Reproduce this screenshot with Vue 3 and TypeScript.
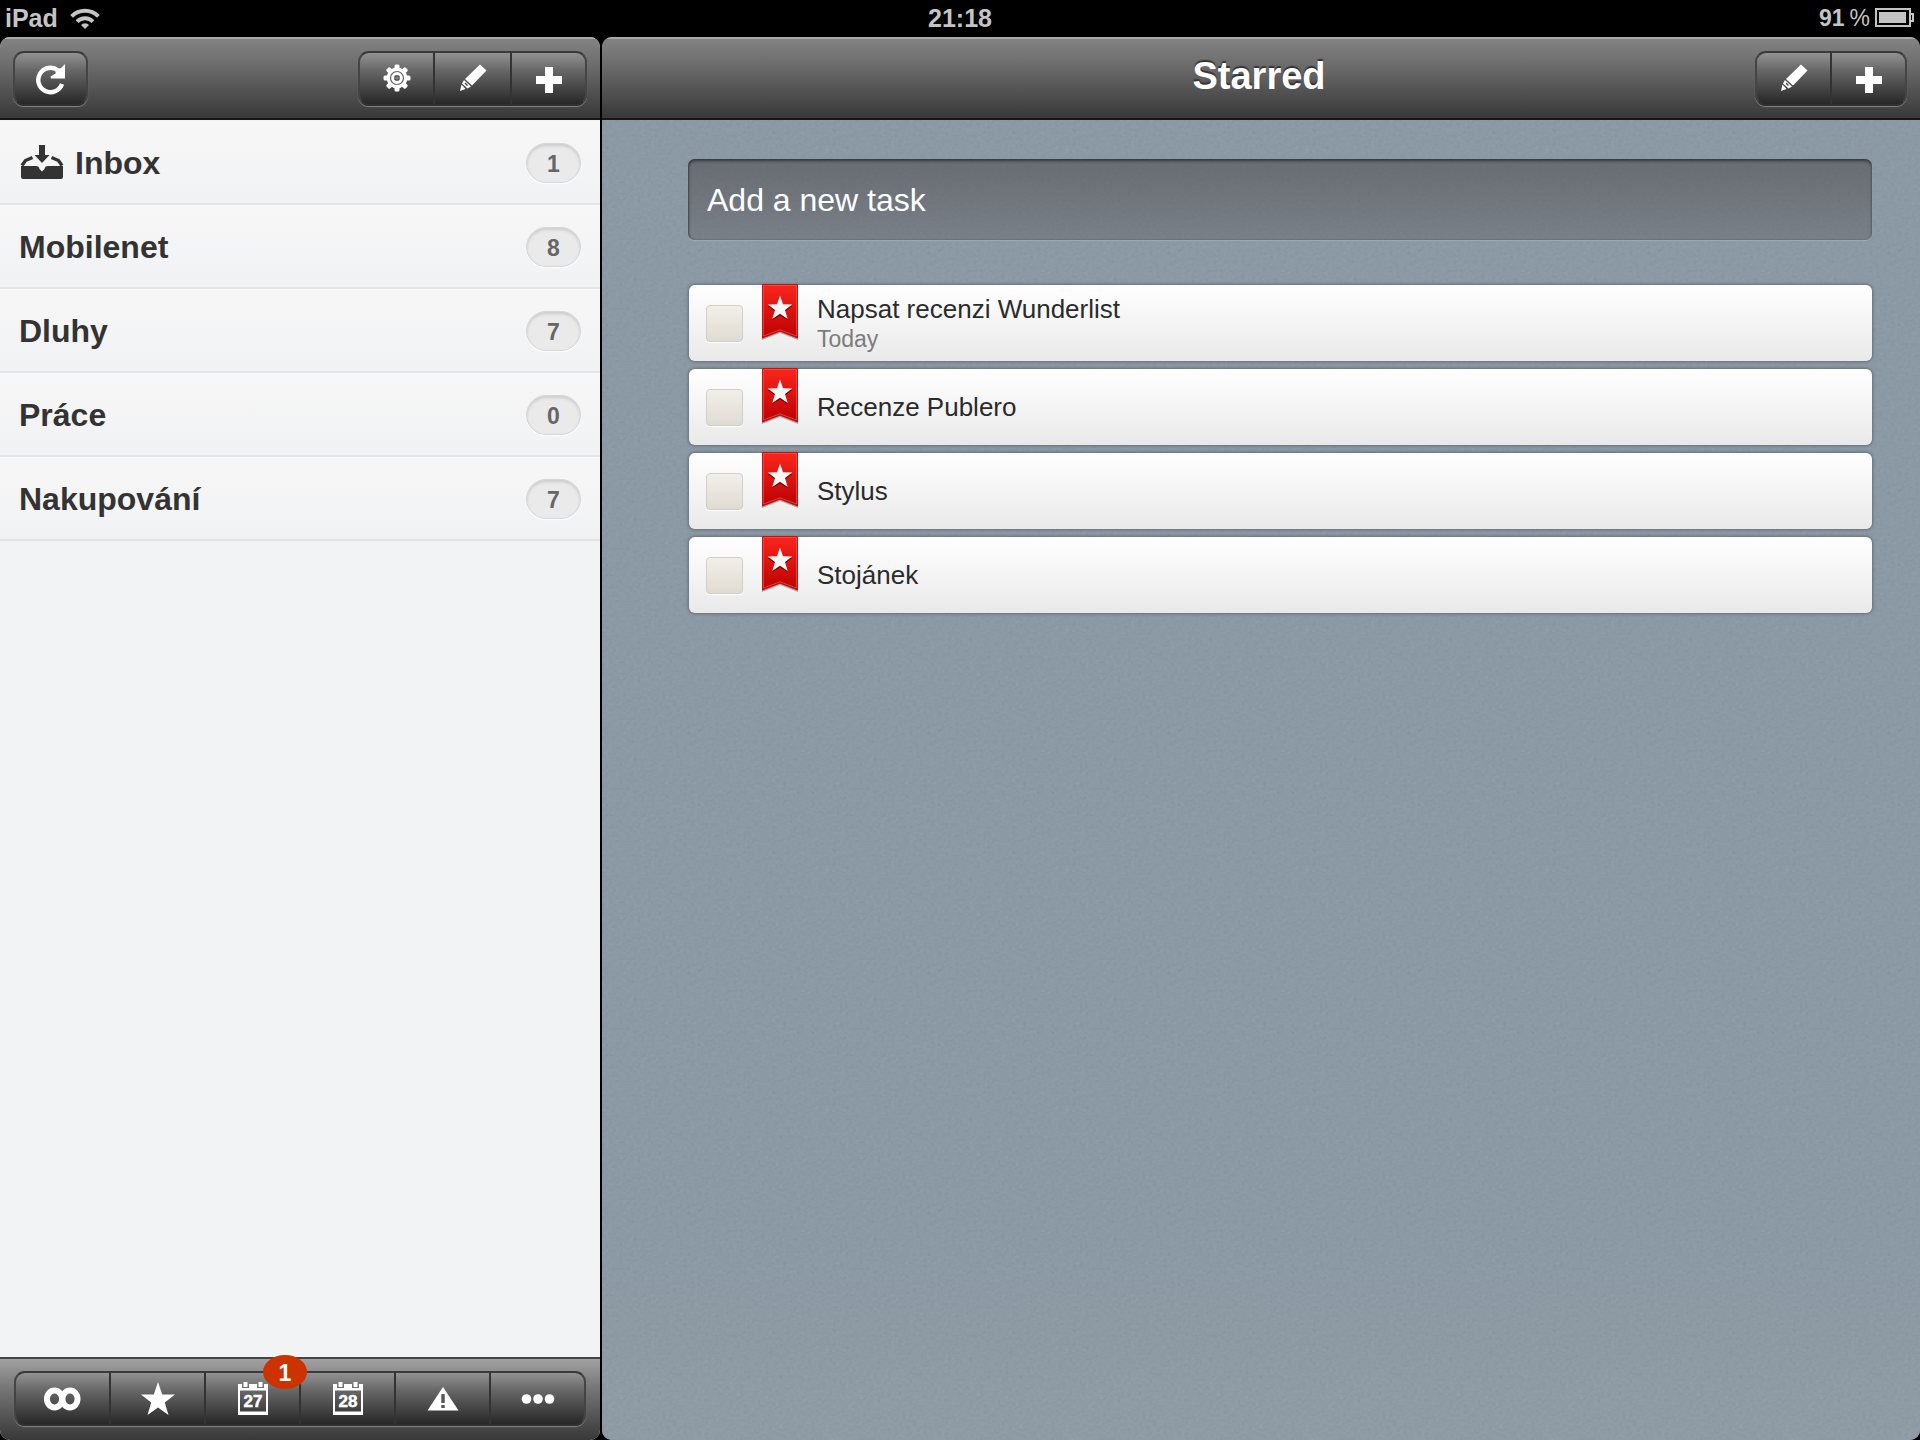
<script setup lang="ts">
import { ref } from 'vue'

interface TaskList {
  name: string
  count: number
  inbox?: boolean
}

interface Task {
  id: string
  title: string
  due?: string
  done: boolean
}

const lists: TaskList[] = [
  { name: 'Inbox', count: 1, inbox: true },
  { name: 'Mobilenet', count: 8 },
  { name: 'Dluhy', count: 7 },
  { name: 'Práce', count: 0 },
  { name: 'Nakupování', count: 7 },
]

const tasks = ref<Task[]>([
  { id: 'task-1', title: 'Napsat recenzi Wunderlist', due: 'Today', done: false },
  { id: 'task-2', title: 'Recenze Publero', done: false },
  { id: 'task-3', title: 'Stylus', done: false },
  { id: 'task-4', title: 'Stojánek', done: false },
])

const draft = ref('')

const gearTeeth = [0, 45, 90, 135, 180, 225, 270, 315]
</script>

<template>
  <div class="screen">
    <header class="status">
      <div class="status-left">
        <span>iPad</span>
        <svg width="30" height="21" viewBox="0 0 30 21" aria-hidden="true">
          <g fill="none" stroke="#c4c4c4" stroke-width="4">
            <path d="M1.6 8.4 A19 19 0 0 1 28.4 8.4" />
            <path d="M7 13.6 A11.5 11.5 0 0 1 23 13.6" />
          </g>
          <path d="M15 21 L11 17 A5.6 5.6 0 0 1 19 17 Z" fill="#c4c4c4" />
        </svg>
      </div>
      <span class="clock">21:18</span>
      <div class="status-right">
        <span>91</span><span class="percent">%</span>
        <svg width="40" height="20" viewBox="0 0 40 20" aria-hidden="true">
          <rect x="1" y="1" width="34" height="17" fill="none" stroke="#c4c4c4" stroke-width="2" />
          <rect x="4" y="4" width="27" height="11" fill="#c4c4c4" />
          <path d="M36 6 H38 V13 H36" fill="none" stroke="#c4c4c4" stroke-width="2" />
        </svg>
      </div>
    </header>

    <div class="panes">
      <aside class="sidebar">
        <div class="bar">
          <div class="group">
            <button class="key" type="button" aria-label="Refresh">
              <svg width="32" height="34" viewBox="1 -1 32 34" aria-hidden="true">
                <path d="M28 22 A12.200 12.200 0 1 1 24 8.400" fill="none" stroke="#fff" stroke-width="4.400" />
                <path d="M31 2 V16.500 H17 L16.500 14.500 L21.500 11.500 L22 7.500 L27 6 Z" fill="#fff" />
              </svg>
            </button>
          </div>
          <div class="group">
            <button class="key" type="button" aria-label="Settings">
              <svg width="28" height="28" viewBox="-14 -14 28 28" aria-hidden="true">
                <g fill="#fff">
                  <rect v-for="a in gearTeeth" :key="a" x="-2.500" y="-13.500" width="5" height="6" rx="1.500" :transform="`rotate(${a})`" />
                  <circle r="10.400" />
                </g>
                <circle r="6.500" fill="none" stroke="#666" stroke-width="1.200" />
                <circle r="2.900" fill="#444" />
                <path d="M-3 0 H3 M0 -3 V3" stroke="#999" stroke-width="1" />
              </svg>
            </button>
            <button class="key" type="button" aria-label="Edit lists">
              <svg width="28" height="28" viewBox="0 0 28 28" aria-hidden="true">
                <path d="M21 0.500 L27.500 6.500 L13 21.500 L6 15 Z" fill="#fff" />
                <path d="M5 16 L12 22.500 L8.500 24.500 L3 19.500 Z" fill="#fff" />
                <path d="M2.500 20.500 L6.500 25 L1 27 Z" fill="#fff" />
                <path d="M6 19 L8.500 21.500" stroke="#555" stroke-width="1.500" />
              </svg>
            </button>
            <button class="key" type="button" aria-label="Add list">
              <svg class="plus" width="28" height="28" viewBox="0 0 28 28" aria-hidden="true">
                <path d="M10 1 H18 V10 H27 V18 H18 V27 H10 V18 H1 V10 H10 Z" fill="#fff" />
              </svg>
            </button>
          </div>
        </div>

        <nav class="lists" aria-label="Lists">
          <a v-for="list in lists" :key="list.name" class="list" href="#">
            <svg v-if="list.inbox" class="tray" width="46" height="36" viewBox="1 1 46 36" aria-hidden="true">
              <g fill="#333">
                <path d="M21 1 H27 V11 H31.500 L24 19 L16.500 11 H21 Z" />
                <path d="M3 22 H18 Q21 22 21.500 25 L24 27.500 L26.500 25 Q27 22 30 22 H45 V33 Q45 35 43 35 H5 Q3 35 3 33 Z" />
              </g>
              <g fill="none" stroke="#333" stroke-width="3.400">
                <path d="M4 21.500 L7.500 16.500 L14.500 13.500" />
                <path d="M44 21.500 L40.500 16.500 L33.500 13.500" />
              </g>
            </svg>
            <span class="name">{{ list.name }}</span>
            <span class="count">{{ list.count }}</span>
          </a>
        </nav>

        <footer class="bar filters">
          <div class="group wide">
            <button class="key" type="button" aria-label="All">
              <svg width="38" height="24" viewBox="0 0 38 24" aria-hidden="true">
                <g fill="none" stroke="#fff" stroke-width="6">
                  <ellipse cx="10.500" cy="12" rx="7.600" ry="8.400" />
                  <ellipse cx="26" cy="12" rx="7.600" ry="8.400" />
                </g>
              </svg>
            </button>
            <button class="key" type="button" aria-label="Starred">
              <svg width="36" height="34" viewBox="0 0 36 34" aria-hidden="true">
                <path d="M18 0 L22.200 12.500 L35 12.600 L24.800 20.500 L28.500 33 L18 25.600 L7.500 33 L11.200 20.500 L1 12.600 L13.800 12.500 Z" fill="#fff" />
              </svg>
            </button>
            <button class="key" type="button" aria-label="Today">
              <svg width="32" height="34" viewBox="0 0 32 34" aria-hidden="true">
                <path d="M1 2 H5 V6 H12 V2 H20 V6 H27 V2 H31 V33 H1 Z M3 8.500 V29.500 H29 V8.500 Z" fill="#fff" fill-rule="evenodd" />
                <path d="M6.500 0 H10.500 V5 H6.500 Z M21.500 0 H25.500 V5 H21.500 Z" fill="#fff" />
                <text class="day" x="16" y="25" text-anchor="middle">27</text>
              </svg>
              <span class="alert">1</span>
            </button>
            <button class="key" type="button" aria-label="Tomorrow">
              <svg width="32" height="34" viewBox="0 0 32 34" aria-hidden="true">
                <path d="M1 2 H5 V6 H12 V2 H20 V6 H27 V2 H31 V33 H1 Z M3 8.500 V29.500 H29 V8.500 Z" fill="#fff" fill-rule="evenodd" />
                <path d="M6.500 0 H10.500 V5 H6.500 Z M21.500 0 H25.500 V5 H21.500 Z" fill="#fff" />
                <text class="day" x="16" y="25" text-anchor="middle">28</text>
              </svg>
            </button>
            <button class="key" type="button" aria-label="Overdue">
              <svg width="32" height="24" viewBox="0 0 32 24" aria-hidden="true">
                <path d="M16 0 L31.500 23.500 H0.500 Z" fill="#fff" />
                <path d="M14.300 7 H17.700 V16 H14.300 Z M14.300 18 H17.700 V21 H14.300 Z" fill="#555" />
              </svg>
            </button>
            <button class="key" type="button" aria-label="More">
              <svg width="34" height="12" viewBox="0 0 34 12" aria-hidden="true">
                <g fill="#fff">
                  <circle cx="5.500" cy="6" r="4.800" />
                  <circle cx="17" cy="6" r="4.800" />
                  <circle cx="28.500" cy="6" r="4.800" />
                </g>
              </svg>
            </button>
          </div>
        </footer>
      </aside>

      <main class="content">
        <div class="bar centered">
          <h1 class="title">Starred</h1>
          <div class="group">
            <button class="key" type="button" aria-label="Edit tasks">
              <svg width="28" height="28" viewBox="0 0 28 28" aria-hidden="true">
                <path d="M21 0.500 L27.500 6.500 L13 21.500 L6 15 Z" fill="#fff" />
                <path d="M5 16 L12 22.500 L8.500 24.500 L3 19.500 Z" fill="#fff" />
                <path d="M2.500 20.500 L6.500 25 L1 27 Z" fill="#fff" />
                <path d="M6 19 L8.500 21.500" stroke="#555" stroke-width="1.500" />
              </svg>
            </button>
            <button class="key" type="button" aria-label="Add task">
              <svg class="plus" width="28" height="28" viewBox="0 0 28 28" aria-hidden="true">
                <path d="M10 1 H18 V10 H27 V18 H18 V27 H10 V18 H1 V10 H10 Z" fill="#fff" />
              </svg>
            </button>
          </div>
        </div>

        <section class="board">
          <input v-model="draft" class="new-task" type="text" placeholder="Add a new task" aria-label="Add a new task" />
          <ul class="tasks">
            <li v-for="task in tasks" :key="task.id" class="task">
              <input :id="task.id" v-model="task.done" class="check" type="checkbox" />
              <svg class="ribbon" width="38" height="58" viewBox="0 0 38 58" aria-hidden="true">
                <defs>
                  <linearGradient :id="`${task.id}-red`" x1="0" y1="0" x2="0" y2="1">
                    <stop offset="0" stop-color="#fb261c" />
                    <stop offset="1" stop-color="#bb0003" />
                  </linearGradient>
                </defs>
                <path d="M1 2 H37 V57 L19 50 L1 57 Z" fill="#000" fill-opacity="0.3" />
                <path d="M1 1 H37 V55.500 L19 48.500 L1 55.500 Z" :fill="`url(#${task.id}-red)`" />
                <path d="M1.500 1.500 H36.500 V54.700 L19 48 L1.500 54.700 Z" fill="none" stroke="#c4120f" />
                <path d="M2.500 2.500 H35.500 V53 L19 46.800 L2.500 53 Z" fill="none" stroke="#f3635c" stroke-opacity="0.6" />
                <path d="M19 14 L22 22.800 L31.300 22.900 L24 28.500 L26.700 37.500 L19 32.200 L11.300 37.500 L14 28.500 L6.700 22.900 L16 22.800 Z" fill="#7d0000" />
                <path d="M19 12.500 L22 21.300 L31.300 21.400 L24 27 L26.700 36 L19 30.700 L11.300 36 L14 27 L6.700 21.400 L16 21.300 Z" fill="#f6f6f6" />
              </svg>
              <label class="text" :for="task.id">
                <span class="task-title">{{ task.title }}</span>
                <span v-if="task.due" class="due">{{ task.due }}</span>
              </label>
            </li>
          </ul>
        </section>
      </main>
    </div>
  </div>
</template>

<style>
body {
  background: #000;
}
</style>

<style scoped>
.screen {
  display: flex;
  flex-direction: column;
  min-height: 100vh;
  background: #000;
  font-family: "Liberation Sans", Arial, sans-serif;
}

.screen *,
.screen {
  box-sizing: border-box;
}

.status {
  display: grid;
  grid-template-columns: 1fr auto 1fr;
  align-items: center;
  height: 37px;
  padding: 0 5px 1px;
  color: #c4c4c4;
  font-size: 25px;
  font-weight: 700;
  line-height: 34px;
}

.status-left,
.status-right {
  display: flex;
  align-items: center;
}

.status-left {
  gap: 12px;
}

.status-right {
  justify-content: flex-end;
  gap: 5px;
  font-size: 23px;
}

.percent {
  font-weight: 400;
}

.panes {
  display: flex;
  flex: 1;
  gap: 2px;
}

.sidebar {
  display: flex;
  flex: 0 0 31.25%;
  flex-direction: column;
  overflow: hidden;
  border-radius: 10px;
  background: #f2f3f5;
}

.content {
  display: flex;
  flex: 1;
  flex-direction: column;
  overflow: hidden;
  border-radius: 10px;
  background: #8b99a5;
}

.bar {
  display: flex;
  align-items: center;
  justify-content: space-between;
  height: 83px;
  padding: 0 13px 1px;
  border-top: 2px solid #a9a9a9;
  border-bottom: 2px solid #161616;
  background: linear-gradient(#838383, #727272 25%, #383838);
}

.centered {
  display: grid;
  grid-template-columns: 1fr auto 1fr;
}

.centered .group {
  grid-column: 3;
  justify-self: end;
}

.title {
  grid-column: 2;
  margin: 0 4px 4px 0;
  color: #fff;
  font-size: 38px;
  font-weight: 700;
  line-height: 44px;
  text-shadow: 0 -2px 1px #333;
}

.filters {
  padding: 0 14px 2px;
  border-top: 2px solid #444;
  border-bottom: 0;
  background: linear-gradient(#a2a2a2, #7c7c7c 30%, #383838);
}

.group {
  display: flex;
  height: 55px;
  border: 2px solid #3a3a3a;
  border-color: #3a3a3a #444 #303030;
  border-radius: 11px;
  background: linear-gradient(#929292, #666 35%, #272727);
  box-shadow: 0 1px 1px #888;
}

.key {
  position: relative;
  display: flex;
  align-items: center;
  justify-content: center;
  width: 77px;
  padding: 0;
  border: 0;
  background: none;
  color: #fff;
  font-family: inherit;
}

.key:first-child {
  width: 73px;
}

.key:only-child {
  width: 71px;
}

.key + .key {
  border-left: 2px solid #333;
}

.key:last-child:not(:only-child) {
  width: 75px;
}

.wide {
  flex: 1;
}

.wide .key {
  flex: 1;
}

.plus {
  margin-top: 4px;
}

.day {
  fill: #fff;
  stroke: #fff;
  stroke-width: 0.5px;
  font-size: 17px;
  font-weight: 700;
}

.alert {
  position: absolute;
  top: -18px;
  right: -8px;
  z-index: 1;
  width: 44px;
  height: 34px;
  border-radius: 50%;
  background: #cc3300;
  color: #fff;
  font-size: 23px;
  font-weight: 700;
  line-height: 36px;
  text-align: center;
}

.lists {
  flex: 1;
  padding-top: 1px;
}

.list {
  display: flex;
  align-items: center;
  height: 84px;
  padding: 2px 19px 0;
  border-bottom: 2px solid #e3e4e6;
  background: linear-gradient(#f7f7f7, #f1f2f4);
  color: #333;
  text-decoration: none;
}

.tray {
  margin-right: 10px;
}

.name {
  flex: 1;
  font-size: 32px;
  font-weight: 700;
  line-height: 40px;
}

.count {
  width: 55px;
  height: 40px;
  border: 1px solid #d6d6d6;
  border-radius: 20px;
  background: #eaeaea;
  box-shadow: inset 0 2px 3px #ccc, 0 1px 1px #fff;
  color: #666;
  font-size: 23px;
  font-weight: 700;
  line-height: 40px;
  text-align: center;
}

.board {
  flex: 1;
  padding: 39px 48px 39px 86px;
  background:
    url("data:image/svg+xml,%3Csvg xmlns='http://www.w3.org/2000/svg' width='240' height='240'%3E%3Cfilter id='n'%3E%3CfeTurbulence type='fractalNoise' baseFrequency='.28 .34' numOctaves='3' stitchTiles='stitch'/%3E%3CfeColorMatrix values='.33 .33 .33 0 0 .33 .33 .33 0 0 .33 .33 .33 0 0 0 0 0 0 1'/%3E%3C/filter%3E%3Crect width='240' height='240' filter='url(%23n)' opacity='.12'/%3E%3C/svg%3E"),
    linear-gradient(#8494a1, #8494a0 85%, #8896a2);
}

.new-task {
  display: block;
  width: 100%;
  height: 81px;
  padding: 2px 19px 0;
  border: 0;
  border-radius: 7px;
  outline: 0;
  background: linear-gradient(rgba(82, 80, 84, 0.62), rgba(102, 100, 104, 0.48));
  box-shadow: inset 0 2px 3px rgba(30, 38, 44, 0.7), inset 1px 0 2px rgba(30, 38, 44, 0.4), 0 1px 1px #9daab4;
  color: #fff;
  font-family: inherit;
  font-size: 32px;
}

.new-task::placeholder {
  color: #fff;
  opacity: 1;
}

.tasks {
  display: flex;
  flex-direction: column;
  gap: 8px;
  margin: 45px 0 0;
  padding: 0 0 0 1px;
  list-style: none;
}

.task {
  display: flex;
  align-items: center;
  height: 76px;
  padding-left: 17px;
  border-radius: 6px;
  background: linear-gradient(#fff, #e9e9e9);
  box-shadow: 0 0 3px 1px #646e77;
}

.check {
  appearance: none;
  width: 37px;
  height: 37px;
  margin: 0;
  border: 1px solid #d3cec3;
  border-radius: 4px;
  background: linear-gradient(#f2efea, #e0dbd2);
  box-shadow: 0 1px 1px #fff;
}

.check:checked {
  background: #b9b2a5;
}

.ribbon {
  align-self: flex-start;
  margin: -2px 18px 0 18px;
}

.text {
  display: flex;
  flex-direction: column;
}

.task-title {
  color: #2b2b2b;
  font-size: 26px;
  line-height: 32px;
}

.due {
  color: #7c7c7c;
  font-size: 23px;
  line-height: 28px;
}
</style>
